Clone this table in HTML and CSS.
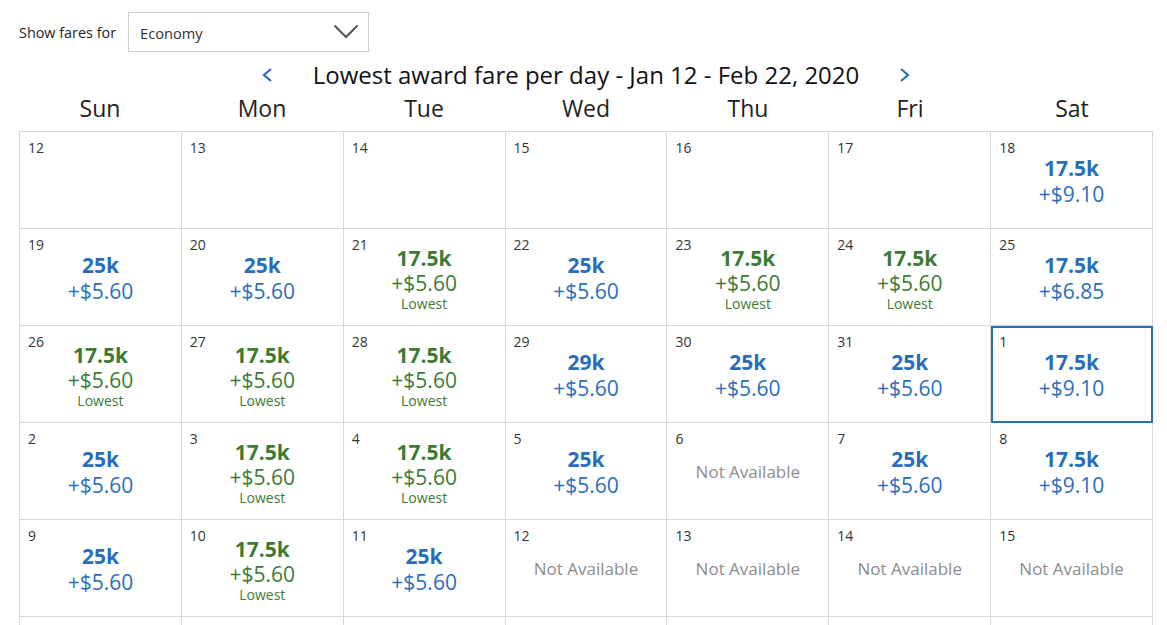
FILE: index.html
```html
<!DOCTYPE html>
<html lang="en">
<head>
<meta charset="utf-8">
<title>Award calendar</title>
<link rel="stylesheet" href="styles.css">
</head>
<body>
<div class="page">
  <div class="filter">
    <span class="filter-label">Show fares for</span>
    <div class="select">
      <span>Economy</span>
      <svg class="select-arrow" width="26" height="15" viewBox="0 0 26 15"><polyline points="1.5,1.5 13,13 24.5,1.5" fill="none" stroke="#555" stroke-width="2"/></svg>
    </div>
  </div>

  <div class="nav">
    <svg class="chev" width="12" height="16" viewBox="0 0 12 16"><polyline points="10,2 3,8 10,14" fill="none" stroke="#2a6ebb" stroke-width="2.2"/></svg>
    <h1 class="title">Lowest award fare per day - Jan 12 - Feb 22, 2020</h1>
    <svg class="chev" width="12" height="16" viewBox="0 0 12 16"><polyline points="2,2 9,8 2,14" fill="none" stroke="#2a6ebb" stroke-width="2.2"/></svg>
  </div>

  <div class="days">
    <div>Sun</div><div>Mon</div><div>Tue</div><div>Wed</div><div>Thu</div><div>Fri</div><div>Sat</div>
  </div>

  <div class="cal">
    <div class="cell"><span class="date">12</span></div>
    <div class="cell"><span class="date">13</span></div>
    <div class="cell"><span class="date">14</span></div>
    <div class="cell"><span class="date">15</span></div>
    <div class="cell"><span class="date">16</span></div>
    <div class="cell"><span class="date">17</span></div>
    <div class="cell"><span class="date">18</span><div class="fare"><div class="miles">17.5k</div><div class="tax">+$9.10</div></div></div>

    <div class="cell"><span class="date">19</span><div class="fare"><div class="miles">25k</div><div class="tax">+$5.60</div></div></div>
    <div class="cell"><span class="date">20</span><div class="fare"><div class="miles">25k</div><div class="tax">+$5.60</div></div></div>
    <div class="cell"><span class="date">21</span><div class="fare low"><div class="miles">17.5k</div><div class="tax">+$5.60</div><div class="tag">Lowest</div></div></div>
    <div class="cell"><span class="date">22</span><div class="fare"><div class="miles">25k</div><div class="tax">+$5.60</div></div></div>
    <div class="cell"><span class="date">23</span><div class="fare low"><div class="miles">17.5k</div><div class="tax">+$5.60</div><div class="tag">Lowest</div></div></div>
    <div class="cell"><span class="date">24</span><div class="fare low"><div class="miles">17.5k</div><div class="tax">+$5.60</div><div class="tag">Lowest</div></div></div>
    <div class="cell"><span class="date">25</span><div class="fare"><div class="miles">17.5k</div><div class="tax">+$6.85</div></div></div>

    <div class="cell"><span class="date">26</span><div class="fare low"><div class="miles">17.5k</div><div class="tax">+$5.60</div><div class="tag">Lowest</div></div></div>
    <div class="cell"><span class="date">27</span><div class="fare low"><div class="miles">17.5k</div><div class="tax">+$5.60</div><div class="tag">Lowest</div></div></div>
    <div class="cell"><span class="date">28</span><div class="fare low"><div class="miles">17.5k</div><div class="tax">+$5.60</div><div class="tag">Lowest</div></div></div>
    <div class="cell"><span class="date">29</span><div class="fare"><div class="miles">29k</div><div class="tax">+$5.60</div></div></div>
    <div class="cell"><span class="date">30</span><div class="fare"><div class="miles">25k</div><div class="tax">+$5.60</div></div></div>
    <div class="cell"><span class="date">31</span><div class="fare"><div class="miles">25k</div><div class="tax">+$5.60</div></div></div>
    <div class="cell selected"><span class="date">1</span><div class="fare"><div class="miles">17.5k</div><div class="tax">+$9.10</div></div></div>

    <div class="cell"><span class="date">2</span><div class="fare"><div class="miles">25k</div><div class="tax">+$5.60</div></div></div>
    <div class="cell"><span class="date">3</span><div class="fare low"><div class="miles">17.5k</div><div class="tax">+$5.60</div><div class="tag">Lowest</div></div></div>
    <div class="cell"><span class="date">4</span><div class="fare low"><div class="miles">17.5k</div><div class="tax">+$5.60</div><div class="tag">Lowest</div></div></div>
    <div class="cell"><span class="date">5</span><div class="fare"><div class="miles">25k</div><div class="tax">+$5.60</div></div></div>
    <div class="cell"><span class="date">6</span><div class="na">Not Available</div></div>
    <div class="cell"><span class="date">7</span><div class="fare"><div class="miles">25k</div><div class="tax">+$5.60</div></div></div>
    <div class="cell"><span class="date">8</span><div class="fare"><div class="miles">17.5k</div><div class="tax">+$9.10</div></div></div>

    <div class="cell"><span class="date">9</span><div class="fare"><div class="miles">25k</div><div class="tax">+$5.60</div></div></div>
    <div class="cell"><span class="date">10</span><div class="fare low"><div class="miles">17.5k</div><div class="tax">+$5.60</div><div class="tag">Lowest</div></div></div>
    <div class="cell"><span class="date">11</span><div class="fare"><div class="miles">25k</div><div class="tax">+$5.60</div></div></div>
    <div class="cell"><span class="date">12</span><div class="na">Not Available</div></div>
    <div class="cell"><span class="date">13</span><div class="na">Not Available</div></div>
    <div class="cell"><span class="date">14</span><div class="na">Not Available</div></div>
    <div class="cell"><span class="date">15</span><div class="na">Not Available</div></div>

    <div class="cell"></div>
    <div class="cell"></div>
    <div class="cell"></div>
    <div class="cell"></div>
    <div class="cell"></div>
    <div class="cell"></div>
    <div class="cell"></div>
  </div>
</div>
</body>
</html>
```
FILE: styles.css
```css
* { box-sizing: border-box; }

html, body {
  margin: 0;
  background: #fff;
  font-family: "Open Sans", "Noto Sans", sans-serif;
  color: #222;
}

.page {
  width: 1153px;
  padding: 12px 0 0 19px;
}

.filter {
  display: flex;
  align-items: center;
  gap: 12px;
  height: 40px;
}

.filter-label {
  font-size: 14.4px;
  color: #222;
}

.select {
  width: 241px;
  height: 40px;
  border: 1px solid #cfcfcf;
  display: flex;
  align-items: center;
  justify-content: space-between;
  padding: 2px 9px 0 11px;
  font-size: 14.6px;
  color: #333;
}

.select-arrow { display: block; margin-top: -3px; }

.nav {
  display: flex;
  align-items: center;
  justify-content: center;
  gap: 40px;
  margin-top: 7px;
  height: 32px;
}

.chev { display: block; }

.title {
  margin: 0;
  font-size: 24px;
  font-weight: 400;
  line-height: 32px;
  color: #111;
}

.days {
  display: grid;
  grid-template-columns: repeat(7, 1fr);
  width: 1134px;
  height: 32px;
  margin-top: 1px;
  margin-bottom: 7px;
  font-size: 23px;
  line-height: 32px;
  text-align: center;
  color: #222;
}

.cal {
  display: grid;
  grid-template-columns: repeat(7, 1fr);
  grid-auto-rows: 97.1px;
  width: 1134px;
  border-top: 1px solid #d8d8d8;
  border-left: 1px solid #d8d8d8;
}

.cell {
  display: grid;
  border-right: 1px solid #d8d8d8;
  border-bottom: 1px solid #d8d8d8;
  padding: 6px 8px;
}

.cell > * { grid-area: 1 / 1; }

.cell.selected {
  outline: 2px solid #2a6ebb;
  outline-offset: -2px;
}

.date {
  justify-self: start;
  align-self: start;
  font-size: 14px;
  line-height: 19px;
  color: #333;
}

.fare {
  justify-self: center;
  align-self: center;
  text-align: center;
  color: #2a6ebb;
  margin-top: 2px;
}

.fare.low { color: #3b7b34; margin-top: 3px; }

.miles {
  font-size: 21px;
  font-weight: 700;
  line-height: 26px;
}

.tax {
  font-size: 21px;
  line-height: 26px;
}

.low .tax { line-height: 24px; }

.tag {
  font-size: 14px;
  line-height: 17px;
}

.na {
  justify-self: center;
  align-self: center;
  font-size: 17px;
  color: #8c8c8c;
  margin-top: 1px;
}
```
